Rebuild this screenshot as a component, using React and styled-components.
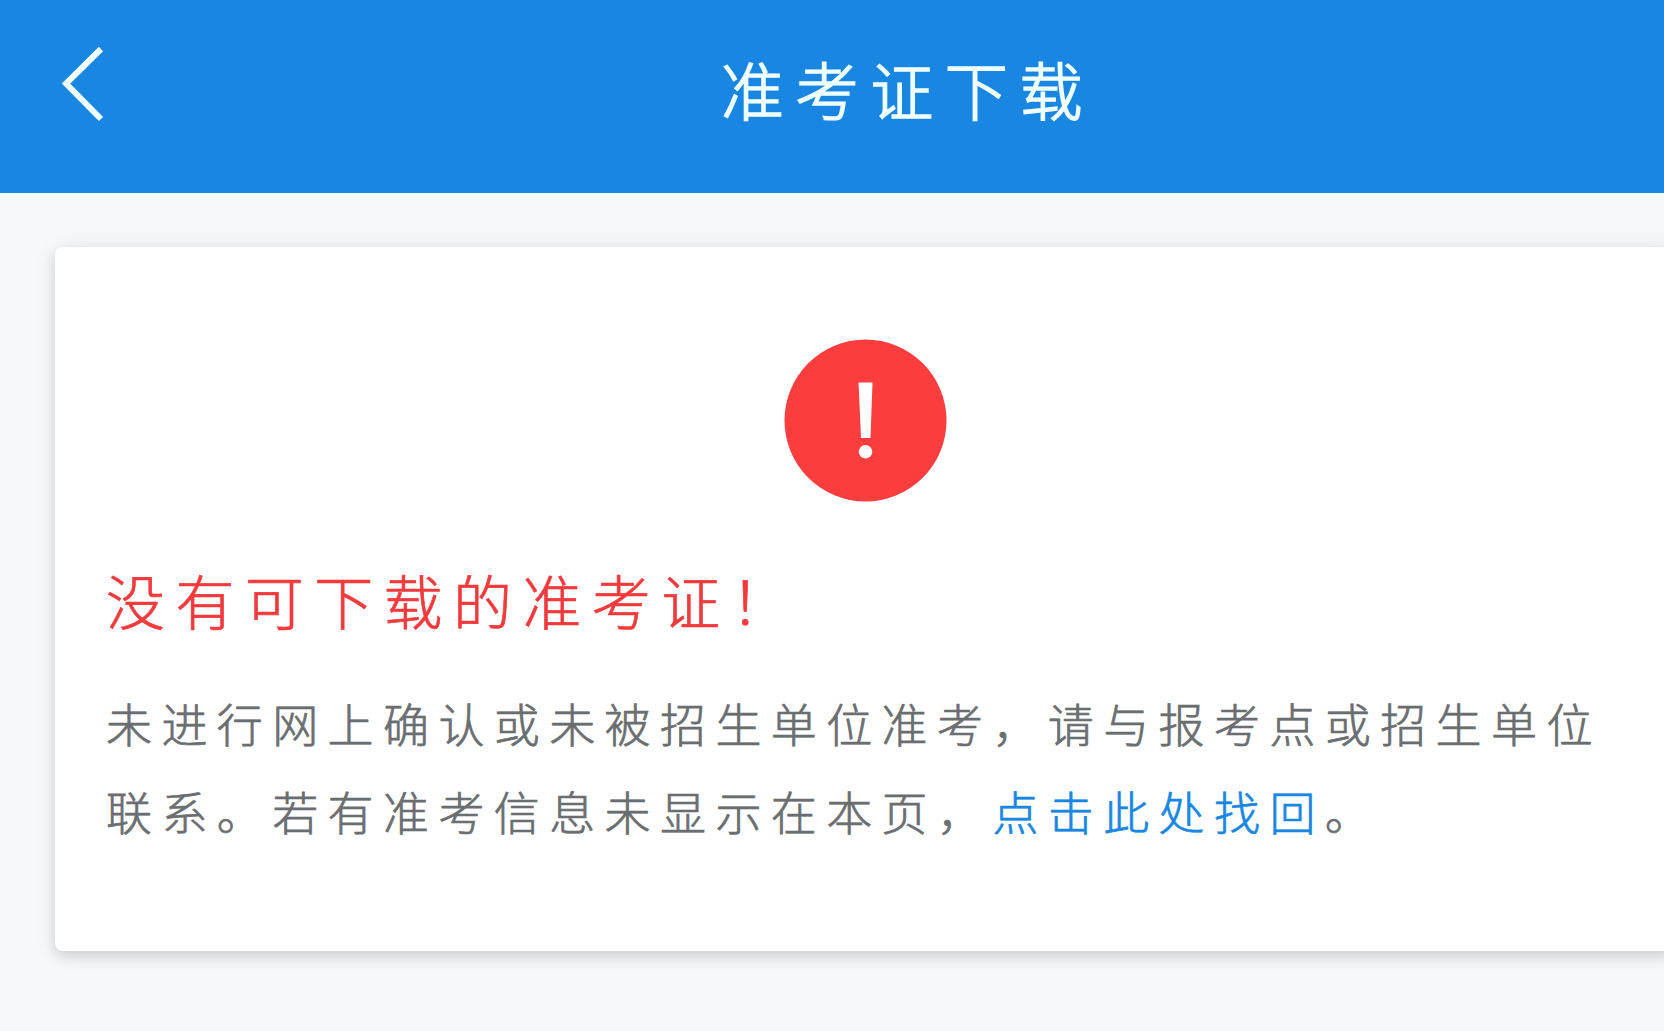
import { styled, createGlobalStyle } from "styled-components"

export default function App(){
    return(
        <Page>
            <GlobalStyle />
            <Header>
                <BackButton aria-label="返回">
                    <svg width="48" height="84" viewBox="0 0 48 84" fill="none">
                        <path d="M41 8 L6 42.5 L41 78" stroke="#f0ffff" strokeWidth="6" />
                    </svg>
                </BackButton>
                <Title>准考证下载</Title>
            </Header>
            <Content>
                <Card>
                    <AlertIcon viewBox="0 0 164 164">
                        <circle cx="82.5" cy="82.5" r="81" fill="#fb3d3e" />
                        <path d="M75.5 44.5 H89.5 L87.5 100 H78 Z" fill="#fff" />
                        <circle cx="82.5" cy="113.8" r="6.8" fill="#fff" />
                    </AlertIcon>
                    <Warning>没有可下载的准考证！</Warning>
                    <Message>
                        <Line>未进行网上确认或未被招生单位准考，请与报考点或招生单位</Line>
                        <Line>联系。若有准考信息未显示在本页，<Link>点击此处找回</Link>。</Line>
                    </Message>
                </Card>
            </Content>
        </Page>
    )
}

const GlobalStyle = createGlobalStyle`
    * {
        box-sizing: border-box;
    }

    body {
        margin: 0;
        background: #f6f8fa;
        font-family: 'Noto Sans CJK SC', sans-serif;
        font-weight: 300;
    }
`

const Page = styled.div`
    height: 1031px;
    overflow: hidden;
    background: #f6f8fa;
`

const Header = styled.header`
    display: flex;
    align-items: flex-start;
    height: 193px;
    padding: 41px 0 0 60px;
    background: #1987e2;
`

const BackButton = styled.button`
    display: flex;
    width: 48px;
    padding: 0;
    border: none;
    background: none;
    cursor: pointer;
`

const Title = styled.h1`
    margin: 0 0 0 613px;
    color: #f0ffff;
    font-size: 63px;
    font-weight: 300;
    line-height: 94px;
    letter-spacing: 11.6px;
    white-space: nowrap;
    -webkit-text-stroke: 1.6px #f0ffff;
`

const Content = styled.main`
    padding: 54px 0 0 55px;
`

const Card = styled.section`
    display: flex;
    flex-direction: column;
    width: 1620px;
    height: 704px;
    padding: 91px 51px 0;
    border-radius: 8px;
    background: #fff;
    box-shadow: 0 5px 14px rgba(0, 0, 0, 0.14), 0 2px 26px rgba(0, 0, 0, 0.06);
`

const AlertIcon = styled.svg`
    align-self: center;
    width: 164px;
    height: 164px;
`

const Warning = styled.h2`
    margin: 48px 0 0;
    color: #f23a3c;
    font-size: 59px;
    font-weight: 300;
    line-height: 100px;
    letter-spacing: 10.4px;
    white-space: nowrap;
    -webkit-text-stroke: 0.7px #f23a3c;
`

const Message = styled.div`
    margin-top: 28px;
`

const Line = styled.p`
    margin: 0;
    color: #6a6e70;
    font-size: 46px;
    line-height: 88px;
    letter-spacing: 9.4px;
    white-space: nowrap;
    -webkit-text-stroke: 0.7px;
`

const Link = styled.a`
    color: #1987e2;
    cursor: pointer;
    -webkit-text-stroke: 0.7px #1987e2;
`
